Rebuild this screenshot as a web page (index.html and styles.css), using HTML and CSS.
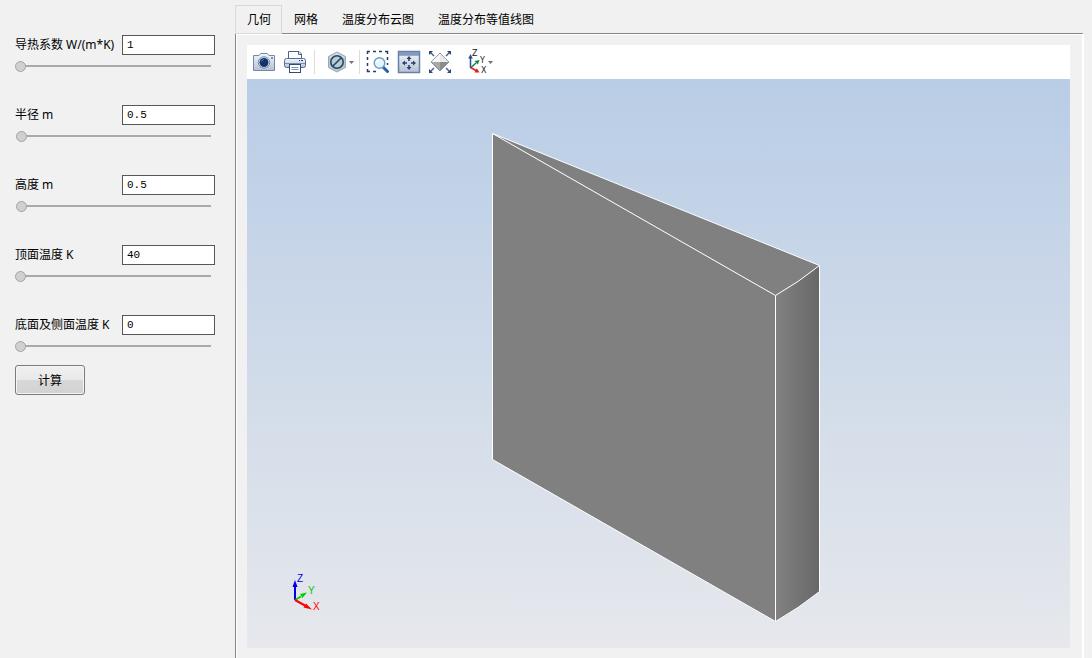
FILE: index.html
```html
<!DOCTYPE html>
<html lang="zh-CN">
<head>
<meta charset="utf-8">
<title>温度分布</title>
<link rel="stylesheet" href="styles.css">
</head>
<body>
<div class="app">
  <form class="sidebar">
    <div class="fields">
      <div class="field">
        <label class="label" for="k">导热系数 W/(m*K)</label>
        <input class="value" id="k" type="text" value="1">
        <input class="slider" type="range" min="0" max="185" value="0" aria-label="导热系数">
      </div>
      <div class="field">
        <label class="label" for="r">半径 m</label>
        <input class="value" id="r" type="text" value="0.5">
        <input class="slider" type="range" min="0" max="185" value="1" aria-label="半径">
      </div>
      <div class="field">
        <label class="label" for="h">高度 m</label>
        <input class="value" id="h" type="text" value="0.5">
        <input class="slider" type="range" min="0" max="185" value="1" aria-label="高度">
      </div>
      <div class="field">
        <label class="label" for="t1">顶面温度 K</label>
        <input class="value" id="t1" type="text" value="40">
        <input class="slider" type="range" min="0" max="185" value="0" aria-label="顶面温度">
      </div>
      <div class="field">
        <label class="label" for="t2">底面及侧面温度 K</label>
        <input class="value" id="t2" type="text" value="0">
        <input class="slider" type="range" min="0" max="185" value="0" aria-label="底面及侧面温度">
      </div>
    </div>
    <button class="compute" type="button">计算</button>
  </form>

  <main class="main">
    <div class="tabs" role="tablist">
      <button class="tab tab-active" type="button" role="tab" aria-selected="true">几何</button>
      <button class="tab" type="button" role="tab">网格</button>
      <button class="tab" type="button" role="tab">温度分布云图</button>
      <button class="tab" type="button" role="tab">温度分布等值线图</button>
    </div>
    <section class="panel">
      <div class="toolbar">
        <button class="tool" type="button" aria-label="快照">
          <svg width="25" height="24" viewBox="0 0 25 24">
            <defs><linearGradient id="metal" x1="0" y1="0" x2="0" y2="1"><stop offset="0" stop-color="#f4f7fb"/><stop offset="1" stop-color="#b4c0d2"/></linearGradient></defs>
            <path d="M1.500 5.500H7L8.500 3.500H15.500L17 5.500H22.500V20.500H1.500Z" fill="url(#metal)" stroke="#7088ad"/>
            <circle cx="12" cy="12.500" r="5.700" fill="#dce5f0" stroke="#6f88af"/>
            <circle cx="12" cy="12.500" r="4.500" fill="#17336b"/>
            <path d="M9.500 11.500A3 3 0 0 1 12 9.500" fill="none" stroke="#5673a6"/>
            <path d="M19 8h2" stroke="#1d3c74"/>
          </svg>
        </button>
        <button class="tool" type="button" aria-label="打印">
          <svg width="25" height="24" viewBox="0 0 25 24">
            <path d="M5.500 9V1.500H16L18.500 4V9Z" fill="#fff" stroke="#4a638f"/>
            <path d="M15.500 1.500V4.500H18.500" fill="none" stroke="#4a638f"/>
            <rect x="1.500" y="8.500" width="21" height="9" rx="2" fill="url(#metal)" stroke="#556e99"/>
            <path d="M2 13.500H22" stroke="#7b8eae"/>
            <path d="M16 10.500h1M18 10.500h2" stroke="#1d3c74"/>
            <rect x="6.500" y="14.500" width="11" height="8" fill="#fff" stroke="#2e4a7d"/>
            <path d="M8.500 17.500h7M8.500 19.500h7" stroke="#8091ae"/>
          </svg>
        </button>
        <span class="separator"></span>
        <button class="tool" type="button" aria-label="选择">
          <svg width="32" height="24" viewBox="0 0 32 24">
            <path d="M16 2L24.500 6.500V17.500L16 22L7.500 17.500V6.500Z" fill="#bac7cd" stroke="#9aaab4"/>
            <path d="M16 3L23.500 7L16 11L8.500 7Z" fill="#d9e2e4"/>
            <circle cx="16" cy="12" r="6.200" fill="#b9ccd1" stroke="#244868" stroke-width="1.600"/>
            <path d="M11.700 16.300L20.300 7.700" stroke="#244868" stroke-width="1.600"/>
            <path d="M28 11h5l-2.500 3z" fill="#727272"/>
          </svg>
        </button>
        <span class="separator"></span>
        <button class="tool" type="button" aria-label="框选缩放">
          <svg width="25" height="24" viewBox="0 0 25 24">
            <path d="M1.500 4V1.500H4M7 1.500h3M13 1.500h3M19 1.500H21.500V4M21.500 7v3M21.500 13v2M1.500 7v3M1.500 13v3M1.500 19v2.500H4M7 21.500h3" fill="none" stroke="#263d6b" stroke-width="1.500"/>
            <path d="M17 17L21.500 21.500" stroke="#2065a7" stroke-width="3" stroke-linecap="round"/>
            <circle cx="13.500" cy="13" r="5.300" fill="#e6f5fb" stroke="#6a9bc9" stroke-width="1.400"/>
            <path d="M10.500 12.500A3.300 3.300 0 0 1 13.500 9.800" fill="none" stroke="#fff" stroke-width="1.500"/>
          </svg>
        </button>
        <button class="tool" type="button" aria-label="缩放到范围">
          <svg width="25" height="24" viewBox="0 0 25 24">
            <rect x="1.500" y="1.500" width="21" height="21" fill="url(#metal)" stroke="#6880a6" stroke-width="1.500"/>
            <rect x="2" y="2" width="20" height="2.500" fill="#7f9bc2"/>
            <path d="M2 5h20" stroke="#526d98"/>
            <path d="M12 6L14.500 9H12.800V11H11.200V9H9.500ZM12 20L9.500 17H11.200V15H12.800V17H14.500ZM5 13L8 10.500V12.200H10V13.800H8V15.500ZM19 13L16 15.500V13.800H14V12.200H16V10.500Z" fill="#29436f"/>
          </svg>
        </button>
        <button class="tool" type="button" aria-label="缩放到所选">
          <svg width="25" height="24" viewBox="0 0 25 24">
            <path d="M2 2L6 6M22 2L18 6M2 22L6 18M22 22L18 18" stroke="#4a6290" stroke-width="1.500"/>
            <path d="M1 1H5L1 5ZM23 1V5L19 1ZM1 23V19L5 23ZM23 23H19L23 19Z" fill="#2c4674"/>
            <path d="M12 3L21 12H3Z" fill="#e9e9e9"/>
            <path d="M12 3V12H3Z" fill="#f6f6f6"/>
            <path d="M3 12H21L12 21Z" fill="#8c8c8c"/>
            <path d="M3 12H12V21Z" fill="#a8a8a8"/>
            <path d="M12 3L21 12L12 21L3 12Z" fill="none" stroke="#7d8490" stroke-width=".8"/>
          </svg>
        </button>
        <button class="tool" type="button" aria-label="视图方向">
          <svg width="34" height="24" viewBox="0 0 34 24">
            <path d="M11.500 18V7" stroke="#254f9b" stroke-width="1.500"/><path d="M9.200 8.500L11.500 4L13.800 8.500Z" fill="#254f9b"/>
            <path d="M12 17.500L17 13" stroke="#168244" stroke-width="1.500"/><path d="M20.500 10L18.800 14.500L15.500 11Z" fill="#168244"/>
            <path d="M11.500 17.500L17 20.500" stroke="#e02020" stroke-width="1.500"/><path d="M20.500 22.500L15.500 22.500L17.800 18.300Z" fill="#e02020"/>
            <text class="axis-small" x="13" y="6">Z</text><text class="axis-small" x="21" y="13">Y</text><text class="axis-small" x="22" y="23">X</text>
            <path d="M29 11h5l-2.500 3z" fill="#727272"/>
          </svg>
        </button>
      </div>
      <div class="viewport">
        <svg class="scene" viewBox="0 0 823 569" preserveAspectRatio="xMidYMid meet" role="img" aria-label="几何模型">
          <defs>
            <linearGradient id="side" x1="0" y1="0" x2="1" y2="0"><stop offset="0" stop-color="#828282"/><stop offset="1" stop-color="#676767"/></linearGradient>
          </defs>
          <path d="M245.500 54.500L572.500 186.500Q552 203 528.500 216.500Z" fill="#808080"/>
          <path d="M245.500 54.500L528.500 216.500V542.500L245.500 380.500Z" fill="#808080"/>
          <path d="M528.500 216.500Q552 203 572.500 186.500V512.500Q552 529 528.500 542.500Z" fill="url(#side)"/>
          <path class="edge" d="M245.500 54.500L572.500 186.500Q552 203 528.500 216.500L245.500 54.500V380.500L528.500 542.500Q552 529 572.500 512.500V186.500M528.500 216.500V542.500"/>
          <path d="M48 521V506" stroke="#0000e6" stroke-width="2"/><path d="M45.500 508L48 501L50.500 508Z" fill="#0000e6"/>
          <path d="M48 521L54 517.500" stroke="#00d000" stroke-width="2"/><path d="M60 513.500L55.500 519L53 515Z" fill="#00d000"/>
          <path d="M48 521L58 526.500" stroke="#f00" stroke-width="2"/><path d="M65 530.500L56.500 528.500L59 524.500Z" fill="#f00"/>
          <text class="axis" x="50" y="503" fill="#0000e6">Z</text>
          <text class="axis" x="61" y="515" fill="#00c800">Y</text>
          <text class="axis" x="66" y="531" fill="#f00">X</text>
        </svg>
      </div>
    </section>
  </main>
</div>
</body>
</html>
```
FILE: styles.css
```css
* { box-sizing: border-box; }

body {
  margin: 0;
  background: #f1f1f1;
  color: #000;
  font: 12px/16px "Noto Sans", "Noto Sans CJK SC", sans-serif;
}

button, input { font: inherit; color: inherit; margin: 0; }

.app { display: flex; min-height: 100vh; }

.sidebar { flex: 0 0 235px; padding: 35px 20px 0 15px; }

.fields { display: grid; gap: 33px; }

.field {
  display: grid;
  grid-template-columns: 1fr 93px;
  row-gap: 6px;
  align-items: center;
}

.label { white-space: nowrap; }

.value {
  width: 100%;
  height: 20px;
  padding: 0 4px;
  border: 1px solid #575757;
  background: #fff;
  font: 11px/18px "Liberation Mono", monospace;
}

.slider {
  grid-column: 1 / -1;
  appearance: none;
  width: 196px;
  height: 11px;
  background: linear-gradient(#aaa, #aaa) right 4px / 188px 2px no-repeat;
}

.slider::-webkit-slider-thumb {
  appearance: none;
  width: 11px;
  height: 11px;
  border: 1px solid #a3a3a3;
  border-radius: 50%;
  background: #d0d0d0;
}

.compute {
  width: 70px;
  height: 30px;
  margin-top: 13px;
  padding: 2px 0 0;
  border: 1px solid #7c7c7c;
  border-radius: 3px;
  background: linear-gradient(#f0f0f0, #e9e9e9 50%, #d8d8d8 50%, #d2d2d2);
  box-shadow: inset 0 0 0 1px #f4f4f4;
}

.main { flex: 1; min-width: 0; display: flex; flex-direction: column; padding: 5px 8px 0 0; }

.tabs { display: flex; position: relative; }

.tab {
  height: 28px;
  padding: 2px 12px 0;
  border: 0;
  background: none;
  white-space: nowrap;
}

.tab-active {
  height: 29px;
  margin-bottom: -1px;
  padding: 1px 10px 0 11px;
  border: 1px solid #d9d9d9;
  background: #f1f1f1;
}

.panel {
  flex: 1;
  display: flex;
  flex-direction: column;
  padding: 11px 12px 10px 11px;
  border: solid #85858b;
  border-width: 1px 0 0 1px;
  border-right: 2px solid #fff;
  box-shadow: inset 1px 1px #fff;
}

.toolbar {
  display: flex;
  align-items: center;
  gap: 6px;
  height: 34px;
  padding-left: 5px;
  background: #fff;
}

.tool { padding: 0; border: 0; background: none; }
.tool svg { display: block; overflow: visible; }

.separator { width: 1px; height: 24px; background: #dcdcdc; }

.axis-small { font: 8px "DejaVu Sans", sans-serif; fill: #222; }

.viewport { flex: 1; display: flex; min-height: 400px; background: linear-gradient(#b9cde6, #e6e8ec); }

.scene { flex: 1; width: 100%; min-width: 0; }

.edge { fill: none; stroke: #fff; stroke-width: 1; stroke-linejoin: round; }

.axis { font: 10px "Liberation Sans", sans-serif; }
```
